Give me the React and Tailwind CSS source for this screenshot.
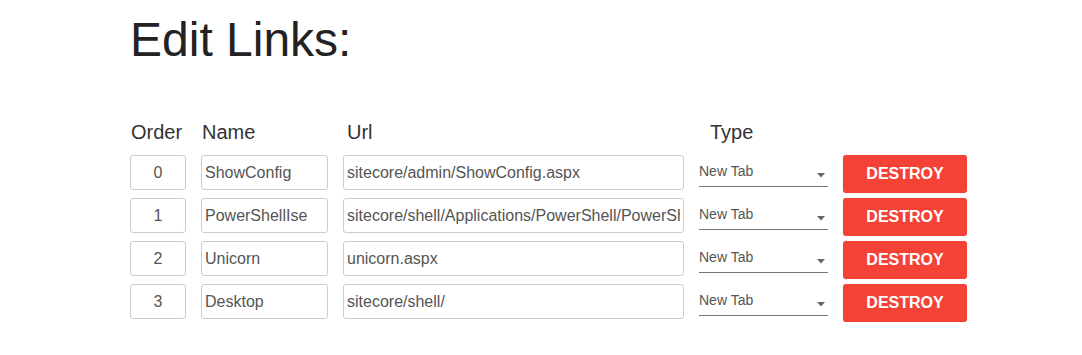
import React from 'react';

const links = [
  { order: 0, name: 'ShowConfig', url: 'sitecore/admin/ShowConfig.aspx' },
  { order: 1, name: 'PowerShellIse', url: 'sitecore/shell/Applications/PowerShell/PowerShellIse' },
  { order: 2, name: 'Unicorn', url: 'unicorn.aspx' },
  { order: 3, name: 'Desktop', url: 'sitecore/shell/' },
];

function Field({ children, center }) {
  return (
    <div
      className={`h-[35px] border border-[#cccccc] rounded-[3px] bg-white text-[16px] leading-[33px] text-[#555] ${
        center ? 'text-center' : 'pl-[3px] pr-[3px]'
      }`}
    >
      <div className="whitespace-nowrap overflow-hidden">{children}</div>
    </div>
  );
}

function TypeSelect() {
  return (
    <div className="h-[32px] border-b border-[#757575] flex items-start justify-between">
      <span className="text-[14px] leading-none mt-[9px] text-[#555]">New Tab</span>
      <svg width="8" height="5" viewBox="0 0 8 5" className="mt-[18px] mr-[3px]">
        <path d="M0 0 L8 0 L4 4.5 Z" fill="#666" />
      </svg>
    </div>
  );
}

export default function App() {
  return (
    <div className="bg-white min-h-[355px] pl-[130px]" style={{ fontFamily: '"Liberation Sans", Arial, sans-serif' }}>
      <h1 className="pt-[16px] text-[48px] leading-none text-[#222]">Edit Links:</h1>

      <div className="mt-[58px] grid grid-cols-[56px_127px_341px_129px_124px] gap-x-[15px] text-[20px] leading-none text-[#333]">
        <div className="pl-[1px]">Order</div>
        <div className="pl-[1px]">Name</div>
        <div className="pl-[4px]">Url</div>
        <div className="pl-[11px]">Type</div>
        <div></div>
      </div>

      <div className="mt-[13px] grid grid-cols-[56px_127px_341px_129px_124px] gap-x-[15px] gap-y-[5px] items-start">
        {links.map((l) => (
          <React.Fragment key={l.order}>
            <Field center>{l.order}</Field>
            <Field>{l.name}</Field>
            <Field>{l.url}</Field>
            <TypeSelect />
            <button className="h-[38px] rounded-[3px] bg-[#f44336] text-white font-bold text-[16px] shadow-[0_0_1px_rgba(0,0,0,0.25)]">
              DESTROY
            </button>
          </React.Fragment>
        ))}
      </div>
    </div>
  );
}
